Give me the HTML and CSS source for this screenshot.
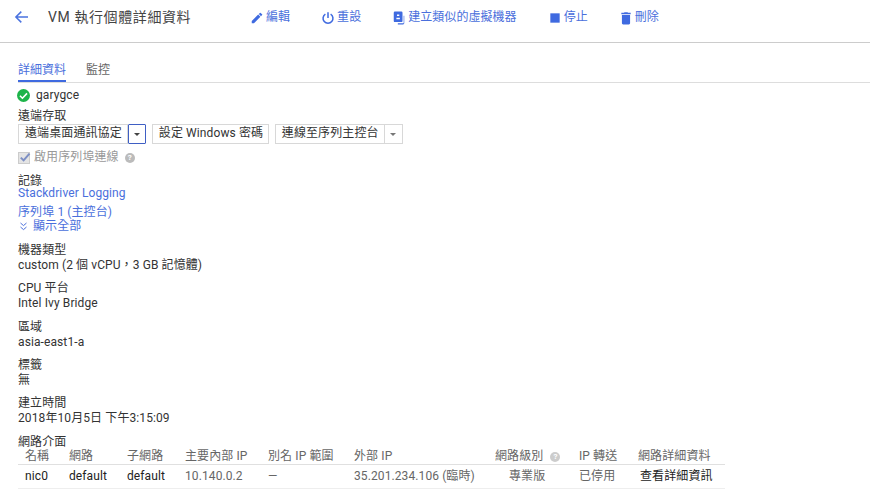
FILE: index.html
```html
<!DOCTYPE html>
<html lang="zh-Hant">
<head>
<meta charset="utf-8">
<title>VM 執行個體詳細資料</title>
<link rel="stylesheet" href="styles.css">
</head>
<body>
<header class="topbar">
  <svg class="back" width="16" height="16" viewBox="0 0 16 16"><path d="M14 8H2.5M7.3 2.6 1.9 8l5.4 5.4" fill="none" stroke="#4a73e0" stroke-width="1.5"/></svg>
  <h1 class="title">VM 執行個體詳細資料</h1>
  <nav class="actions">
    <a class="action"><svg width="14" height="14" viewBox="0 0 24 24"><path fill="#3f6ae0" d="M3 17.25V21h3.75L17.81 9.94l-3.75-3.75L3 17.25zM20.71 7.04a1 1 0 0 0 0-1.41l-2.34-2.34a1 1 0 0 0-1.41 0l-1.83 1.83 3.75 3.75 1.83-1.83z"/></svg>編輯</a>
    <a class="action"><svg width="14" height="14" viewBox="0 0 24 24"><path fill="none" stroke="#3f6ae0" stroke-width="2.6" d="M12 2v10M7.5 5.4a8.5 8.5 0 1 0 9 0"/></svg>重設</a>
    <a class="action"><svg width="14" height="14" viewBox="0 0 24 24"><path fill="#3f6ae0" fill-rule="evenodd" d="M5 1h11a2 2 0 0 1 2 2v14a2 2 0 0 1-2 2H5a2 2 0 0 1-2-2V3a2 2 0 0 1 2-2zm3.5 5v2.5h4V6zm-1 5.5V14h6v-2.5z"/><path fill="#3f6ae0" d="M20 8h1v13a2 2 0 0 1-2 2h-9v-2h10z"/></svg>建立類似的虛擬機器</a>
    <a class="action"><svg width="14" height="14" viewBox="0 0 24 24"><rect x="4" y="4" width="16" height="16" fill="#3f6ae0"/></svg>停止</a>
    <a class="action"><svg width="14" height="14" viewBox="0 0 24 24"><path fill="#3f6ae0" d="M5 21a2 2 0 0 0 2 2h10a2 2 0 0 0 2-2V7H5zM20 3h-4.5l-1-1h-5l-1 1H4v2.5h16z"/></svg>刪除</a>
  </nav>
</header>
<div class="tabs">
  <span class="tab tab-active">詳細資料</span>
  <span class="tab">監控</span>
</div>
<main class="content">
  <div class="name-row">
    <svg width="13" height="13" viewBox="0 0 24 24"><circle cx="12" cy="12" r="12" fill="#1db44a"/><path d="M5.5 12.5 10 17l8.5-9" fill="none" stroke="#fff" stroke-width="3"/></svg>
    <span>garygce</span>
  </div>
  <div class="label l-remote">遠端存取</div>
  <div class="buttons">
    <div class="btn-group"><span class="btn">遠端桌面通訊協定</span><span class="caret caret-focus"><i></i></span></div>
    <span class="btn btn-wide">設定 Windows 密碼</span>
    <div class="btn-group"><span class="btn">連線至序列主控台</span><span class="caret caret-grey"><i></i></span></div>
  </div>
  <div class="check-row">
    <svg width="13" height="13" viewBox="0 0 13 13"><rect x=".5" y="1.5" width="11" height="11" fill="#e4e4e4" stroke="#ccc"/><path d="M2.8 6.6 5.6 9.4 11.5 2.6" fill="none" stroke="#7d8fc4" stroke-width="2"/></svg>
    <span>啟用序列埠連線</span>
    <span class="help">?</span>
  </div>
  <section class="f-log">
    <div class="label">記錄</div>
    <a class="link link-first">Stackdriver Logging</a>
    <a class="link link-gap">序列埠 1 (主控台)</a>
    <a class="link show-all"><svg width="9" height="9" viewBox="0 0 9 9"><path d="M1.5 1 4.5 3.6 7.5 1M1.5 5 4.5 7.6 7.5 5" fill="none" stroke="#4a6fdc"/></svg>顯示全部</a>
  </section>
  <section class="field f-first"><div class="label">機器類型</div><div class="value">custom (2 個 vCPU，3 GB 記憶體)</div></section>
  <section class="field"><div class="label">CPU 平台</div><div class="value">Intel Ivy Bridge</div></section>
  <section class="field"><div class="label">區域</div><div class="value">asia-east1-a</div></section>
  <section class="field"><div class="label">標籤</div><div class="value">無</div></section>
  <section class="field"><div class="label">建立時間</div><div class="value">2018年10月5日 下午3:15:09</div></section>
  <section class="field">
    <div class="label">網路介面</div>
    <table class="net">
      <thead><tr>
        <th class="c1">名稱</th><th class="c2">網路</th><th class="c3">子網路</th><th class="c4">主要內部 IP</th><th class="c5">別名 IP 範圍</th><th class="c6">外部 IP</th><th class="c7">網路級別<span class="help small">?</span></th><th class="c8">IP 轉送</th><th class="c9">網路詳細資料</th>
      </tr></thead>
      <tbody><tr>
        <td class="dark">nic0</td><td class="dark">default</td><td class="dark">default</td><td>10.140.0.2</td><td>—</td><td>35.201.234.106 (臨時)</td><td class="tier">專業版</td><td>已停用</td><td class="dark details">查看詳細資訊</td>
      </tr></tbody>
    </table>
  </section>
</main>
</body>
</html>
```
FILE: styles.css
```css
* { box-sizing: border-box; }
html, body { margin: 0; height: 490px; overflow: hidden; background: #fff; }
body { font: 12px/15px Roboto, "Noto Sans CJK TC", sans-serif; color: #333; letter-spacing: .1px; }
svg { display: block; flex: none; }

.topbar { height: 43px; border-bottom: 1px solid #ccc; display: flex; align-items: flex-start; padding: 9px 0 0 14px; }
.title { margin: 0 0 0 18px; width: 202px; font-size: 14px; line-height: 17px; font-weight: 400; color: #444; letter-spacing: .6px; white-space: nowrap; }
.actions { display: flex; gap: 31px; }
.action { display: flex; align-items: center; gap: 2px; color: #4a6fdc; line-height: 17px; letter-spacing: .05px; white-space: nowrap; }

.tabs { height: 40px; margin-left: 18px; padding-top: 20px; border-bottom: 1px solid #ddd; display: flex; gap: 20px; }
.tab { height: 19px; line-height: 15px; color: #666; letter-spacing: 0; white-space: nowrap; }
.tab-active { color: #4a6fdc; border-bottom: 2px solid #3f6ae0; }

.content { padding: 0 0 0 18px; }
.name-row { display: flex; align-items: center; gap: 6px; height: 15px; margin: 5px 0 0 -1px; }
.label { line-height: 15px; color: #333; }
.l-remote { margin-top: 6px; }
.buttons { display: flex; gap: 6px; height: 20px; }
.btn-group { display: flex; }
.btn { display: block; height: 20px; border: 1px solid #d8d8d8; background: #fff; padding: 0 5px 0 6px; line-height: 17px; color: #333; white-space: nowrap; }
.btn-wide { width: 117px; }
.caret { width: 18px; height: 20px; border: 1px solid #d8d8d8; border-left: 0; display: flex; align-items: center; justify-content: center; }
.caret i { border: 3px solid transparent; border-top-color: #444; border-bottom: 0; }
.caret-focus { border: 1px solid #3f5fc4; border-radius: 1px; }
.caret-grey i { border-top-color: #777; }
.check-row { display: flex; align-items: center; gap: 3px; margin-top: 6px; height: 15px; color: #999; }
.check-row .help { margin-left: 3px; }
.help { display: inline-block; width: 10px; height: 10px; border-radius: 50%; background: #bbb; color: #fff; font-size: 8px; line-height: 10px; text-align: center; font-weight: 700; letter-spacing: 0; vertical-align: -1px; }
.f-log { margin-top: 9px; }
.field { margin-top: 8.33px; }
.f-first { margin-top: 10px; }
.value { line-height: 15px; color: #333; }
.link { display: block; color: #4a6fdc; line-height: 14px; }
.link-first { margin-top: -3px; }
.link-gap { margin-top: 5px; }
.show-all { display: flex; align-items: center; gap: 5px; padding-left: 1px; }

.net { border-collapse: collapse; margin-top: -1px; width: 707px; table-layout: fixed; }
.net th { font-weight: 400; color: #666; height: 15px; padding: 0 0 0 7px; text-align: left; line-height: 15px; border-bottom: 1px solid #e0e0e0; white-space: nowrap; }
.net td { height: 24px; padding: 1px 0 0 7px; color: #666; border-bottom: 1px solid #eee; white-space: nowrap; }
.net td.dark { color: #222; }
.net td.tier { padding-left: 21px; }
.net td.details { padding-left: 9px; }
.net .c1 { width: 44px; }
.net .c2 { width: 58px; }
.net .c3 { width: 58px; }
.net .c4 { width: 83px; }
.net .c5 { width: 86px; }
.net .c6 { width: 141px; }
.net .c7 { width: 84px; }
.net .c8 { width: 59px; }
.net .c9 { width: 94px; }
.help.small { background: #ccc; margin-left: 7px; vertical-align: 1px; }
```
